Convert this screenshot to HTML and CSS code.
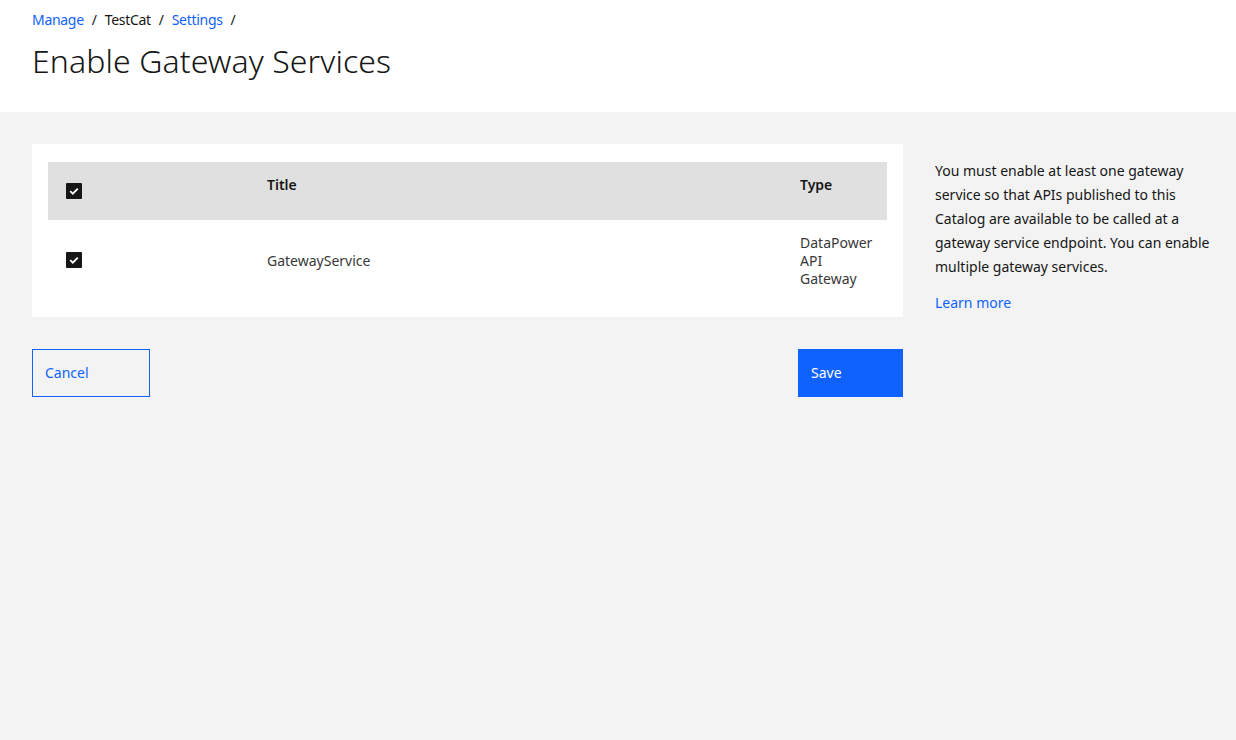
FILE: index.html
```html
<!DOCTYPE html>
<html>
<head>
<meta charset="utf-8">
<link rel="stylesheet" href="styles.css">
</head>
<body>
<header class="page-header">
  <nav class="breadcrumb">
    <a class="crumb-link" href="#">Manage</a><span class="sep">/</span>
    <span class="crumb">TestCat</span><span class="sep">/</span>
    <a class="crumb-link" href="#">Settings</a><span class="sep">/</span>
  </nav>
  <h1 class="title">Enable Gateway Services</h1>
</header>
<main class="content">
  <div class="left">
    <section class="card">
      <div class="table">
        <div class="row head">
          <div class="cell check-cell"><span class="checkbox"><svg viewBox="0 0 16 16" width="16" height="16"><path d="M4.2 8.2 L6.8 10.7 L11.8 5.6" fill="none" stroke="#fff" stroke-width="1.8"/></svg></span></div>
          <div class="cell th">Title</div>
          <div class="cell th">Type</div>
        </div>
        <div class="row body-row">
          <div class="cell check-cell"><span class="checkbox"><svg viewBox="0 0 16 16" width="16" height="16"><path d="M4.2 8.2 L6.8 10.7 L11.8 5.6" fill="none" stroke="#fff" stroke-width="1.8"/></svg></span></div>
          <div class="cell td">GatewayService</div>
          <div class="cell td type">DataPower API Gateway</div>
        </div>
      </div>
    </section>
    <div class="actions">
      <button class="btn btn-secondary">Cancel</button>
      <button class="btn btn-primary">Save</button>
    </div>
  </div>
  <aside class="side">
    <p class="side-text">You must enable at least one gateway service so that APIs published to this Catalog are available to be called at a gateway service endpoint. You can enable multiple gateway services.</p>
    <a class="learn" href="#">Learn more</a>
  </aside>
</main>
</body>
</html>
```

FILE: styles.css
```css
* { box-sizing: border-box; }
html, body { margin: 0; padding: 0; }
body {
  font-family: "Noto Sans", "Open Sans", sans-serif;
  color: #161616;
  background: #f3f3f3;
  width: 1236px;
  height: 740px;
  overflow: hidden;
}
.page-header {
  background: #fff;
  height: 112px;
  padding: 10px 32px 0;
}
.breadcrumb {
  font-size: 14px;
  line-height: 20px;
  display: flex;
  align-items: center;
  letter-spacing: -0.3px;
}
.crumb-link { color: #0f62fe; text-decoration: none; }
.crumb { color: #161616; }
.sep { margin: 0 8px; color: #161616; }
.title {
  margin: 11px 0 0;
  font-size: 32px;
  font-weight: 300;
  line-height: 40px;
  letter-spacing: 0.1px;
}
.content {
  display: flex;
  padding: 32px 16px 0 32px;
  gap: 32px;
}
.left { flex: 0 0 871px; }
.card {
  background: #fff;
  padding: 18px 16px 17px;
}
.row {
  display: grid;
  grid-template-columns: 219px 533px 87px;
}
.head { background: #e0e0e0; height: 58px; }
.body-row { height: 80px; }
.cell { font-size: 14px; }
.check-cell {
  display: flex;
  align-items: center;
  padding-left: 18px;
}
.checkbox {
  width: 16px; height: 16px;
  background: #161616;
  display: inline-flex;
  border-radius: 1px;
}
.th {
  font-weight: 600;
  padding-top: 14px;
  line-height: 18px;
}
.td {
  color: #393939;
  display: flex;
  align-items: center;
  line-height: 18px;
  padding-top: 2px;
}
.type { padding-right: 14px; }
.actions {
  display: flex;
  justify-content: space-between;
  margin-top: 32px;
}
.btn {
  height: 48px;
  font-family: inherit;
  font-size: 14px;
  text-align: left;
  padding: 0 12px 2px;
  border-radius: 0;
  cursor: pointer;
}
.btn-secondary {
  width: 118px;
  background: transparent;
  border: 1px solid #0f62fe;
  color: #0f62fe;
}
.btn-primary {
  width: 105px;
  background: #0f62fe;
  border: 1px solid #0f62fe;
  color: #fff;
}
.side { flex: 0 0 280px; padding-top: 15px; }
.side-text {
  margin: 0;
  font-size: 14px;
  line-height: 24px;
  color: #161616;
}
.learn {
  display: inline-block;
  margin-top: 14px;
  font-size: 14px;
  color: #0f62fe;
  text-decoration: none;
}
```
